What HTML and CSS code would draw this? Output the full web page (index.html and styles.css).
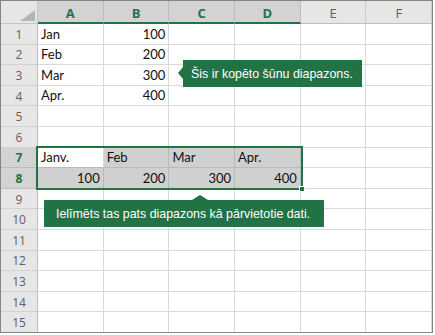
FILE: index.html
```html
<!DOCTYPE html>
<html lang="lv">
<head>
<meta charset="utf-8">
<link rel="stylesheet" href="styles.css">
</head>
<body>
<div class="frame">
  <div class="sheet">
    <div class="corner"><span class="tri"></span></div>
    <div class="ch sel">A</div><div class="ch sel">B</div><div class="ch sel">C</div><div class="ch sel">D</div><div class="ch">E</div><div class="ch">F</div>

    <div class="rh">1</div><div class="c">Jan</div><div class="c num">100</div><div class="c"></div><div class="c"></div><div class="c"></div><div class="c"></div>
    <div class="rh">2</div><div class="c">Feb</div><div class="c num">200</div><div class="c"></div><div class="c"></div><div class="c"></div><div class="c"></div>
    <div class="rh">3</div><div class="c">Mar</div><div class="c num">300</div><div class="c"></div><div class="c"></div><div class="c"></div><div class="c"></div>
    <div class="rh">4</div><div class="c">Apr.</div><div class="c num">400</div><div class="c"></div><div class="c"></div><div class="c"></div><div class="c"></div>
    <div class="rh">5</div><div class="c"></div><div class="c"></div><div class="c"></div><div class="c"></div><div class="c"></div><div class="c"></div>
    <div class="rh">6</div><div class="c"></div><div class="c"></div><div class="c"></div><div class="c"></div><div class="c"></div><div class="c"></div>
    <div class="rh sel">7</div><div class="c active">Janv.</div><div class="c hl">Feb</div><div class="c hl">Mar</div><div class="c hl">Apr.</div><div class="c"></div><div class="c"></div>
    <div class="rh sel">8</div><div class="c num hl">100</div><div class="c num hl">200</div><div class="c num hl">300</div><div class="c num hl">400</div><div class="c"></div><div class="c"></div>
    <div class="rh">9</div><div class="c"></div><div class="c"></div><div class="c"></div><div class="c"></div><div class="c"></div><div class="c"></div>
    <div class="rh">10</div><div class="c"></div><div class="c"></div><div class="c"></div><div class="c"></div><div class="c"></div><div class="c"></div>
    <div class="rh">11</div><div class="c"></div><div class="c"></div><div class="c"></div><div class="c"></div><div class="c"></div><div class="c"></div>
    <div class="rh">12</div><div class="c"></div><div class="c"></div><div class="c"></div><div class="c"></div><div class="c"></div><div class="c"></div>
    <div class="rh">13</div><div class="c"></div><div class="c"></div><div class="c"></div><div class="c"></div><div class="c"></div><div class="c"></div>
    <div class="rh">14</div><div class="c"></div><div class="c"></div><div class="c"></div><div class="c"></div><div class="c"></div><div class="c"></div>
    <div class="rh">15</div><div class="c"></div><div class="c"></div><div class="c"></div><div class="c"></div><div class="c"></div><div class="c"></div>
  </div>

  <div class="selection"></div>
  <div class="handle"></div>

  <div class="callout callout-left">Šis ir kopēto šūnu diapazons.</div>
  <div class="callout callout-up">Ielīmēts tas pats diapazons kā pārvietotie dati.</div>
</div>
</body>
</html>
```

FILE: styles.css
```css
html, body {
  margin: 0;
  padding: 0;
  background: #ffffff;
}

.frame {
  position: relative;
  width: 433px;
  height: 333px;
  box-sizing: border-box;
  border: 1px solid #858585;
  overflow: hidden;
  background: #ffffff;
}

.sheet {
  display: grid;
  grid-template-columns: 37px repeat(6, 65.7px);
  grid-template-rows: 23px repeat(15, 20.6px);
}

.sheet > div {
  box-sizing: border-box;
}

.corner {
  position: relative;
  background: #e6e6e6;
  border-right: 1px solid #c6c6c6;
  border-bottom: 1px solid #c6c6c6;
}

.tri {
  position: absolute;
  right: 2px;
  bottom: 2px;
  width: 0;
  height: 0;
  border-left: 15px solid transparent;
  border-bottom: 11px solid #b4b4b4;
}

.ch {
  display: flex;
  align-items: center;
  justify-content: center;
  background: #e6e6e6;
  border-right: 1px solid #cbcbcb;
  border-bottom: 1px solid #bdbdbd;
  font: 13px "Open Sans", "Liberation Sans", sans-serif;
  color: #5e5e5e;
  padding-top: 1px;
}

.ch.sel {
  background: #d3d3d3;
  color: #217346;
  font-weight: 700;
  border-right-color: #bcbcbc;
  border-bottom: 2px solid #217346;
  padding-top: 2px;
}

.rh {
  display: flex;
  align-items: center;
  justify-content: center;
  background: #e6e6e6;
  border-right: 1px solid #bdbdbd;
  border-bottom: 1px solid #d2d2d2;
  font: 12px "Open Sans", "Liberation Sans", sans-serif;
  color: #5e5e5e;
  padding-top: 1px;
}

.rh.sel {
  background: #d3d3d3;
  color: #217346;
  font-weight: 700;
  border-bottom-color: #bcbcbc;
}

.c {
  display: flex;
  align-items: flex-end;
  padding: 0 3px 2px 3px;
  background: #ffffff;
  border-right: 1px solid #d9d9d9;
  border-bottom: 1px solid #d9d9d9;
  font: 13px Lato, "Liberation Sans", sans-serif;
  line-height: 15px;
  color: #111111;
  white-space: nowrap;
}

.c.num {
  justify-content: flex-end;
}

.c.hl {
  background: #d0d0d0;
  border-right-color: #b9b9b9;
  border-bottom-color: #b9b9b9;
}

.c.active {
  border-bottom-color: #b9b9b9;
}

.selection {
  position: absolute;
  left: 35px;
  top: 145px;
  width: 267px;
  height: 44px;
  box-sizing: border-box;
  border: 2px solid #217346;
  pointer-events: none;
}

.handle {
  position: absolute;
  left: 298px;
  top: 185px;
  width: 6px;
  height: 6px;
  box-sizing: border-box;
  background: #217346;
  border: 1px solid #ffffff;
}

.callout {
  position: absolute;
  height: 27px;
  box-sizing: border-box;
  display: flex;
  align-items: center;
  background: #217346;
  color: #ffffff;
  font: 12.4px "Liberation Sans", Arial, sans-serif;
  white-space: nowrap;
}

.callout::before {
  content: "";
  position: absolute;
  width: 0;
  height: 0;
}

.callout-left {
  left: 182px;
  top: 59px;
  width: 179px;
  padding-left: 8px;
}

.callout-left::before {
  left: -5px;
  top: 7px;
  border-top: 6.5px solid transparent;
  border-bottom: 6.5px solid transparent;
  border-right: 5px solid #217346;
}

.callout-up {
  left: 43px;
  top: 199px;
  width: 280px;
  padding-left: 12px;
}

.callout-up::before {
  left: 148px;
  top: -5px;
  border-left: 8px solid transparent;
  border-right: 8px solid transparent;
  border-bottom: 5px solid #217346;
}
```
